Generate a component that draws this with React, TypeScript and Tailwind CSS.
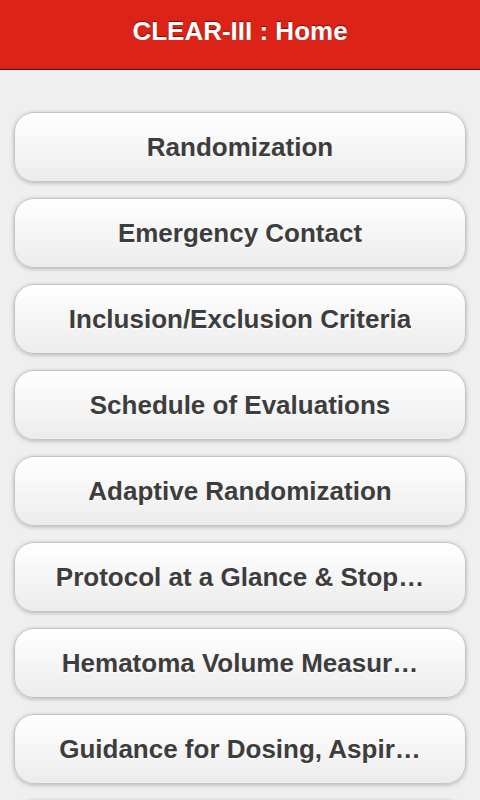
const items = [
  "Randomization",
  "Emergency Contact",
  "Inclusion/Exclusion Criteria",
  "Schedule of Evaluations",
  "Adaptive Randomization",
  "Protocol at a Glance & Stop…",
  "Hematoma Volume Measur…",
  "Guidance for Dosing, Aspir…",
  "Contacts",
];

export default function App() {
  return (
    <div className="h-[800px] overflow-hidden bg-[#efefef] font-['Liberation_Sans',Arial,sans-serif]">
      <header className="flex h-[70px] items-center justify-center border-b border-[#3a1a14] bg-[#dc2317] pb-[6px]">
        <h1 className="text-[26px] font-bold text-white [text-shadow:0_-1px_1px_#7a1008]">CLEAR-III : Home</h1>
      </header>
      <nav className="flex flex-col gap-4 px-[14px] pt-[42px]">
        {items.map((label) => (
          <button
            key={label}
            className="flex h-[70px] shrink-0 items-center justify-center rounded-[20px] border border-[#c4c4c4] bg-gradient-to-b from-white to-[#ececec] px-[40px] text-[26px] font-bold text-[#3d3d3d] shadow-[0_1px_4px_rgba(0,0,0,0.25)] [text-shadow:0_1px_0_#fff]"
          >
            <span className="truncate">{label}</span>
          </button>
        ))}
      </nav>
    </div>
  );
}
